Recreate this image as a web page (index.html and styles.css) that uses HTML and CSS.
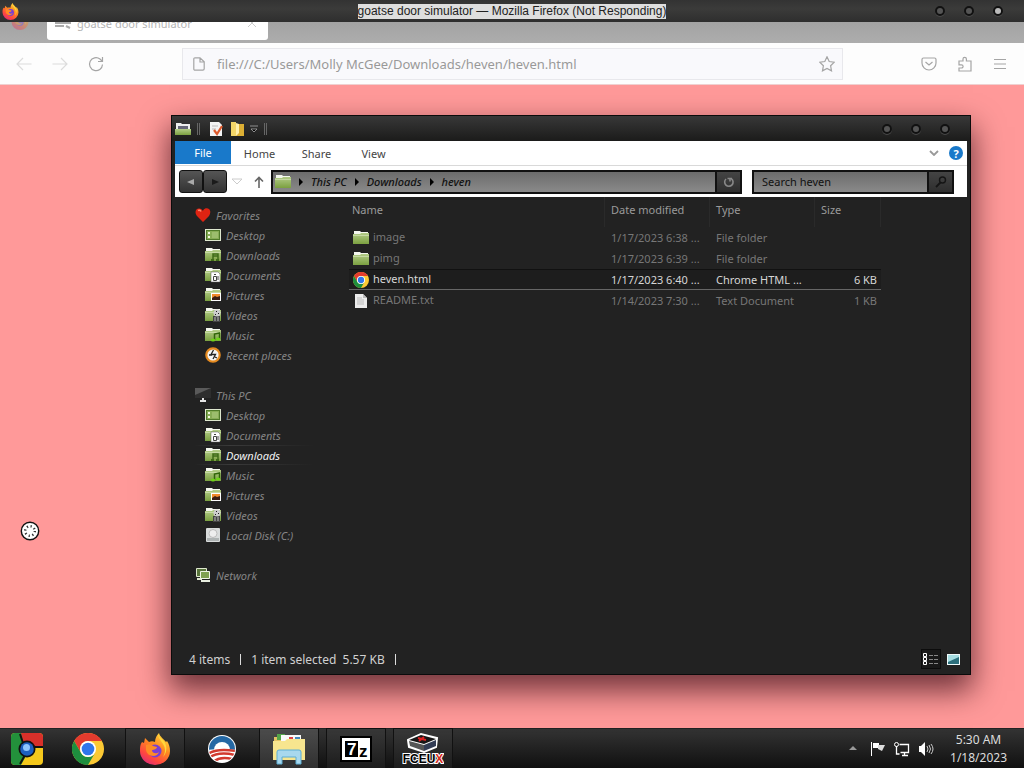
FILE: index.html
```
<!DOCTYPE html>
<html lang="en">
<head>
  <meta charset="UTF-8" />
  <meta name="viewport" content="width=device-width, initial-scale=1" />
  <title>Desktop</title>
  <link rel="stylesheet" href="styles.css">
</head>
<body>

  <!-- shared icons -->
  <svg class="defs" width="0" height="0" aria-hidden="true">
    <defs>
      <linearGradient id="g-green" x1="0" y1="0" x2="0" y2="1">
        <stop offset="0" stop-color="#b3cc88" /><stop offset="1" stop-color="#7ba040" />
      </linearGradient>
      <linearGradient id="g-fox" x1="0.8" y1="0" x2="0.2" y2="1">
        <stop offset="0" stop-color="#ffe040" /><stop offset="0.4" stop-color="#ff8a20" /><stop offset="0.75" stop-color="#ff4640" /><stop offset="1" stop-color="#d82a80" />
      </linearGradient>
      <symbol id="i-folder" viewBox="0 0 16 16">
        <path d="M1 1h6l1 1h7v4H1z" fill="#f4f7ee" />
        <path d="M0 4h7l1-1h8v11H0z" fill="url(#g-green)" />
        <path d="M0 5.500h16" stroke="#c6d9a3" />
      </symbol>
      <symbol id="i-desktop" viewBox="0 0 16 16">
        <rect x=".5" y="2.500" width="15" height="11" fill="#86ac55" stroke="#dfe8cf" />
        <rect x="1.500" y="3.500" width="13" height="9" fill="none" stroke="#4f7a2a" />
        <path d="M3 5h2v2H3zM3 9h2v2H3z" fill="#eef7dc" />
        <path d="M7 5h6v6H7z" fill="#9cbd6e" />
      </symbol>
      <symbol id="i-downloads" viewBox="0 0 16 16">
        <use href="#i-folder" width="16" height="16" />
        <path d="M8 13V7h5v6M8 9h5" fill="none" stroke="#3f6b18" stroke-width="1.500" />
        <path d="M6 12h3v2H6zM11 12h3v2h-3z" fill="#3f6b18" />
      </symbol>
      <symbol id="i-documents" viewBox="0 0 16 16">
        <use href="#i-folder" width="16" height="16" />
        <path d="M6 5h7l2 2v8H6z" fill="#fff" stroke="#555" stroke-width=".5" />
        <path d="M8.500 9.500h3v4h-3zM9 7.500h2M13 9v4" fill="none" stroke="#444" />
      </symbol>
      <symbol id="i-pictures" viewBox="0 0 16 16">
        <use href="#i-folder" width="16" height="16" />
        <rect x="6" y="6" width="10" height="8" fill="#fff" />
        <rect x="7" y="7" width="8" height="6" fill="#f08a2c" />
        <path d="M7 13v-2l3-2 2 1 3-1v4z" fill="#3a1d14" />
      </symbol>
      <symbol id="i-videos" viewBox="0 0 16 16">
        <use href="#i-folder" width="16" height="16" />
        <path d="M8 9h7v6H8z" fill="#444" />
        <circle cx="12" cy="6" r="3.500" fill="#ccc" />
        <path d="M11 4h1v1h-1zM13 6h1v1h-1zM10 7h1v1h-1z" fill="#222" />
        <path d="M9 11h2M12 11h2M9 13h2M12 13h2" stroke="#bbb" />
      </symbol>
      <symbol id="i-music" viewBox="0 0 16 16">
        <use href="#i-folder" width="16" height="16" />
        <path d="M9.500 13V7l5-1v6" fill="none" stroke="#2f6508" stroke-width="1.500" />
        <ellipse cx="8" cy="13" rx="2.200" ry="1.600" fill="#6fd318" />
        <ellipse cx="13" cy="12" rx="2.200" ry="1.600" fill="#6fd318" />
      </symbol>
      <symbol id="i-chrome" viewBox="0 0 32 32">
        <circle cx="16" cy="16" r="16" fill="#fcc934" />
        <path d="M2.140 8A16 16 0 0 1 29.860 8H16a8 8 0 0 0-6.930 12z" fill="#e33b2e" />
        <path d="M2.140 8A16 16 0 0 0 16 32l6.930-12A8 8 0 0 1 9.070 20z" fill="#1e8e3e" />
        <circle cx="16" cy="16" r="8" fill="#fff" />
        <circle cx="16" cy="16" r="6.300" fill="#2f76ea" />
      </symbol>
      <symbol id="i-firefox" viewBox="0 0 32 32">
        <path d="M3 9l2 1 1-5 4 4c2-1 4-1 6 0 0-4 2-7 4-9 1 4 5 6 7 9l1-1c2 3 3 6 3 10a15 14 0 0 1-30 0c0-4 0-6 2-9z" fill="url(#g-fox)" />
        <circle cx="16" cy="18" r="6.500" fill="#7a3fd4" />
        <path d="M7 12c3-1 5-1 7 1l4 1c0 2-3 3-5 3 0 4 5 4 7 2-2 6-12 5-13-2z" fill="#ff8c25" />
        <path d="M19 1c0 6 7 9 7 16 0 3-1 5-2 7 5-5 4-13 0-17-2-2-4-3-5-6z" fill="#ffd83c" />
      </symbol>
    </defs>
  </svg>

  <div class="firefox">
    <header class="ff-title">
      <svg class="ff-logo" width="17" height="17"><use href="#i-firefox" /></svg>
      <h1>goatse door simulator — Mozilla Firefox (Not Responding)</h1>
      <div class="orbs">
        <button class="orb" aria-label="Minimize"></button>
        <button class="orb" aria-label="Maximize"></button>
        <button class="orb orb-lit" aria-label="Close"></button>
      </div>
    </header>

    <div class="ff-tabs">
      <svg class="ff-view" width="18" height="18"><use href="#i-firefox" /></svg>
      <div class="ff-tab">
        <svg width="16" height="16" viewBox="0 0 16 16"><path d="M0 5h16M0 8h16M0 11h9M11 11l4 2" stroke="#aaa" stroke-width="2" /></svg>
        <span>goatse door simulator</span>
        <button aria-label="Close tab"><svg width="8" height="8" viewBox="0 0 8 8"><path d="M0 0l8 8M8 0L0 8" stroke="#ccc" /></svg></button>
      </div>
    </div>

    <div class="ff-toolbar">
      <button aria-label="Back" class="faded"><svg width="16" height="16" viewBox="0 0 16 16"><path d="M15.500 8H1M7 2L1 8l6 6" /></svg></button>
      <button aria-label="Forward" class="faded"><svg width="16" height="16" viewBox="0 0 16 16"><path d="M.5 8H15M9 2l6 6-6 6" /></svg></button>
      <button aria-label="Reload"><svg width="16" height="16" viewBox="0 0 16 16"><path d="M14.500 8.500A6.500 6.500 0 1 1 12 3l2 2M14.500 1v4.500H10" /></svg></button>
      <div class="ff-url">
        <svg width="12" height="14" viewBox="0 0 12 14"><path d="M2 .8h5l4.200 4v7a1.400 1.400 0 0 1-1.400 1.400H2A1.200 1.200 0 0 1 .8 12V2A1.200 1.200 0 0 1 2 .8zM7 1v4h4" /></svg>
        <input type="text" aria-label="Address" value="file:///C:/Users/Molly McGee/Downloads/heven/heven.html">
        <button aria-label="Bookmark"><svg width="16" height="16" viewBox="0 0 16 16"><path d="M8 .8l2.200 4.700 5 .7-3.600 3.500.9 5.100L8 12.400l-4.500 2.400.9-5.100L.8 6.200l5-.7z" /></svg></button>
      </div>
      <div class="ff-actions">
        <button aria-label="Pocket"><svg width="16" height="16" viewBox="0 0 16 16"><path d="M2.500 2h11A1.500 1.500 0 0 1 15 3.500V7A7 7 0 0 1 1 7V3.500A1.500 1.500 0 0 1 2.500 2zM4.500 6L8 9l3.500-3" /></svg></button>
        <button aria-label="Extensions"><svg width="16" height="16" viewBox="0 0 16 16"><path d="M2 5h4V3a1.600 1.600 0 0 1 3.400 0v2H14v10H2v-3h2.500a1.500 1.500 0 0 0 0-3.200H2z" /></svg></button>
        <button aria-label="Menu"><svg width="14" height="16" viewBox="0 0 14 16"><path d="M1 3.500h12M1 8h12M1 12.500h12" /></svg></button>
      </div>
    </div>
  </div>

  <svg class="cursor" width="20" height="20" viewBox="0 0 20 20">
    <circle cx="10" cy="10" r="8.700" fill="#fff" stroke="#111" stroke-width="1.400" />
    <circle cx="10" cy="10" r="4.800" fill="none" stroke="#333" stroke-width="2.400" stroke-dasharray="1.200 2.570" />
  </svg>

  <section class="explorer">
    <header class="ex-title">
      <svg width="16" height="16" viewBox="0 0 16 16"><path d="M1 2h5l1 1h8v6H1z" fill="#eee" /><path d="M3 5h10v3H3z" fill="#667" /><path d="M0 8h16v6H0z" fill="url(#g-green)" /></svg>
      <i class="grip"></i>
      <button aria-label="Properties"><svg width="16" height="16" viewBox="0 0 16 16"><path d="M2 1h9l3 3v11H2z" fill="#f3f3f3" /><path d="M4 5h6M4 8h4" stroke="#bbb" /><path d="M6 9l3 4 5-8" fill="none" stroke="#dd5a2c" stroke-width="2.200" /></svg></button>
      <button aria-label="New folder"><svg width="16" height="16" viewBox="0 0 16 16"><path d="M2 1h5v14H2z" fill="#f3d668" /><path d="M7 3h8v12H7z" fill="#dcaf34" /><path d="M7 2l3 1v9l-3 3z" fill="#fff0ad" /></svg></button>
      <button aria-label="Customize"><svg width="8" height="8" viewBox="0 0 8 8"><path d="M0 1h8M1 4h6L4 7z" fill="#000" stroke="#aaa" stroke-width=".8" /></svg></button>
      <i class="grip"></i>
      <div class="orbs">
        <button class="orb" aria-label="Minimize"></button>
        <button class="orb" aria-label="Maximize"></button>
        <button class="orb" aria-label="Close"></button>
      </div>
    </header>

    <nav class="ribbon">
      <button class="file">File</button>
      <button>Home</button>
      <button>Share</button>
      <button>View</button>
      <div class="ribbon-end">
        <button aria-label="Expand ribbon"><svg width="10" height="6" viewBox="0 0 10 6"><path d="M1 1l4 4 4-4" fill="none" stroke="#999" stroke-width="1.800" /></svg></button>
        <button class="help" aria-label="Help">?</button>
      </div>
    </nav>

    <div class="navbar">
      <div class="backfwd">
        <button aria-label="Back"><svg width="8" height="8" viewBox="0 0 8 8"><path d="M7 1v6L0 4z" fill="#aaa" /></svg></button>
        <button aria-label="Forward"><svg width="8" height="8" viewBox="0 0 8 8"><path d="M1 1v6l7-3z" fill="#1b1b1b" /></svg></button>
      </div>
      <button class="plain" aria-label="Recent locations"><svg width="12" height="7" viewBox="0 0 12 7"><path d="M1 1h10L6 6z" fill="#fff" stroke="#ccc" /></svg></button>
      <button class="plain" aria-label="Up"><svg width="10" height="12" viewBox="0 0 10 12"><path d="M5 12V2M1 5.500L5 1.500l4 4" fill="none" stroke="#666" stroke-width="1.600" /></svg></button>
      <div class="address">
        <div class="crumbs">
          <svg width="16" height="16"><use href="#i-folder" /></svg>
          <i></i><a href="#">This PC</a>
          <i></i><a href="#">Downloads</a>
          <i></i><a href="#">heven</a>
        </div>
        <button aria-label="Refresh"><svg width="12" height="12" viewBox="0 0 12 12"><path d="M3 3A4.200 4.200 0 1 0 8.500 2.800M4.500 2.500H9M5 2.500h2v3" fill="none" stroke="#888" stroke-width="1.600" /></svg></button>
      </div>
      <div class="search">
        <input type="text" placeholder="Search heven" aria-label="Search heven">
        <button aria-label="Search"><svg width="12" height="12" viewBox="0 0 12 12"><circle cx="7.500" cy="4" r="3" fill="none" stroke="#151515" stroke-width="1.400" /><path d="M5.500 6.500L1 11" stroke="#151515" stroke-width="1.800" /></svg></button>
      </div>
    </div>

    <div class="ex-body">
      <aside class="tree">
        <ul>
          <li class="root"><a href="#"><svg width="16" height="16" viewBox="0 0 16 16"><path d="M8 15L2 9C-1 5 1 1 4.500 1.500 7 2 8 4 8 4s1-3 4-2.700C16 2 16 6 14 9z" fill="#e02312" /><path d="M3 3.500q2-1 3 1" stroke="#ff8a70" stroke-width="1.500" fill="none" /></svg>Favorites</a></li>
          <li><a href="#"><svg width="16" height="16"><use href="#i-desktop" /></svg>Desktop</a></li>
          <li><a href="#"><svg width="16" height="16"><use href="#i-downloads" /></svg>Downloads</a></li>
          <li><a href="#"><svg width="16" height="16"><use href="#i-documents" /></svg>Documents</a></li>
          <li><a href="#"><svg width="16" height="16"><use href="#i-pictures" /></svg>Pictures</a></li>
          <li><a href="#"><svg width="16" height="16"><use href="#i-videos" /></svg>Videos</a></li>
          <li><a href="#"><svg width="16" height="16"><use href="#i-music" /></svg>Music</a></li>
          <li><a href="#"><svg width="16" height="16" viewBox="0 0 16 16"><circle cx="8" cy="8" r="6.700" fill="#f4f4f4" stroke="#e58a1f" stroke-width="2.200" /><path d="M8.500 3L6 7.500h4.500L8 12M4 8h3M10 10l2 1" stroke="#222" stroke-width="1.300" fill="none" /></svg>Recent places</a></li>
        </ul>
        <ul>
          <li class="root"><a href="#"><svg width="16" height="16" viewBox="0 0 16 16"><path d="M0 1h16v10H0z" fill="#2e2e2e" /><path d="M0 1h16L0 8z" fill="#5a5a5a" /><path d="M7 11h2v2h2v2H5v-2h2z" fill="#e6e6e6" /></svg>This PC</a></li>
          <li><a href="#"><svg width="16" height="16"><use href="#i-desktop" /></svg>Desktop</a></li>
          <li><a href="#"><svg width="16" height="16"><use href="#i-documents" /></svg>Documents</a></li>
          <li class="current"><a href="#"><svg width="16" height="16"><use href="#i-downloads" /></svg>Downloads</a></li>
          <li><a href="#"><svg width="16" height="16"><use href="#i-music" /></svg>Music</a></li>
          <li><a href="#"><svg width="16" height="16"><use href="#i-pictures" /></svg>Pictures</a></li>
          <li><a href="#"><svg width="16" height="16"><use href="#i-videos" /></svg>Videos</a></li>
          <li><a href="#"><svg width="16" height="16" viewBox="0 0 16 16"><rect x="1" y="1" width="14" height="14" rx="1" fill="#d9dcdc" /><path d="M2 11h12v3H2z" fill="#aeb3b3" /><circle cx="8" cy="6.500" r="4" fill="#eee" stroke="#bbb" /></svg>Local Disk (C:)</a></li>
        </ul>
        <ul>
          <li class="root"><a href="#"><svg width="16" height="16" viewBox="0 0 16 16"><path d="M1.500 1.500h10v8h-10z" fill="#58743a" stroke="#dfe8cf" /><path d="M2 12h5" stroke="#dfe8cf" stroke-width="2" /><path d="M5.500 4.500h9v7h-9z" fill="#7fa050" stroke="#eef3e4" /><path d="M6 14h9" stroke="#e8eee0" stroke-width="2" /></svg>Network</a></li>
        </ul>
      </aside>

      <main class="files">
        <table>
          <thead>
            <tr><th class="c-name">Name</th><th>Date modified</th><th>Type</th><th class="c-size">Size</th></tr>
          </thead>
          <tbody>
            <tr><td><svg width="16" height="16"><use href="#i-folder" /></svg>image</td><td>1/17/2023 6:38 ...</td><td>File folder</td><td></td></tr>
            <tr><td><svg width="16" height="16"><use href="#i-folder" /></svg>pimg</td><td>1/17/2023 6:39 ...</td><td>File folder</td><td></td></tr>
            <tr class="selected"><td><svg width="16" height="16"><use href="#i-chrome" /></svg>heven.html</td><td>1/17/2023 6:40 ...</td><td>Chrome HTML ...</td><td>6 KB</td></tr>
            <tr><td><svg width="16" height="16" viewBox="0 0 16 16"><path d="M2 1h8l4 4v10H2z" fill="#ececec" /><path d="M10 1v4h4" fill="#bbb" /><path d="M4 5h5M4 7h7M4 9h7M4 11h7" stroke="#bbb" /></svg>README.txt</td><td>1/14/2023 7:30 ...</td><td>Text Document</td><td>1 KB</td></tr>
          </tbody>
        </table>
      </main>
    </div>

    <footer class="status">
      <span>4 items</span>
      <span>1 item selected&nbsp; 5.57 KB</span>
      <div class="views">
        <button class="on" aria-label="Details"><svg width="16" height="14" viewBox="0 0 16 14"><path d="M.5 1.500h3v3h-3zM.5 5.500h3v3h-3zM.5 9.500h3v3h-3z" fill="#222" stroke="#fff" /><path d="M6 3.500h10M6 7.500h10M6 11.500h10" stroke="#888" stroke-dasharray="4 1" /></svg></button>
        <button aria-label="Large icons"><svg width="13" height="11" viewBox="0 0 13 11"><rect width="13" height="11" fill="#effafa" /><rect x="1" y="1" width="11" height="9" fill="#2c6f7c" /><path d="M1 1h11v2L1 8z" fill="#a5dde2" /></svg></button>
      </div>
    </footer>
  </section>

  <footer class="taskbar">
    <button class="start" aria-label="Start">
      <svg width="32" height="32" viewBox="0 0 32 32">
        <rect width="32" height="32" rx="4" fill="#f4c81c" />
        <path d="M9 0h19a4 4 0 0 1 4 4v10H20L12 8z" fill="#d8302a" />
        <path d="M4 0h6l2 8-2 10 5 5-5 9H4a4 4 0 0 1-4-4V4a4 4 0 0 1 4-4z" fill="#23913b" />
        <path d="M9 1l3 9M22 14h10M14 22l-5 9" stroke="#111" stroke-width="2" />
        <circle cx="16" cy="16" r="8.500" fill="#111" />
        <circle cx="16" cy="16" r="6.800" fill="#1d5fc0" /><circle cx="15.500" cy="14.500" r="3.500" fill="#8fc6ff" />
      </svg>
    </button>
    <div class="tasks">
      <button aria-label="Chrome"><svg width="32" height="32"><use href="#i-chrome" /></svg></button>
      <button class="open" aria-label="Firefox"><svg width="32" height="32"><use href="#i-firefox" /></svg></button>
      <button aria-label="Campaign">
        <svg width="28" height="28" viewBox="0 0 28 28">
          <defs><clipPath id="disc"><circle cx="14" cy="14" r="13" /></clipPath></defs>
          <circle cx="14" cy="14" r="14" fill="#fff" />
          <g clip-path="url(#disc)">
            <path d="M0 0h28v17H0z" fill="#2468a4" />
            <circle cx="14" cy="15" r="8" fill="#fff" />
            <path d="M0 15q14-2 28 0v13H0z" fill="#fff" />
            <path d="M0 19q8-6 28-3M1 23q9-7 26-3M5 27q7-6 19-3" fill="none" stroke="#d23a2e" stroke-width="2.400" />
          </g>
        </svg>
      </button>
      <button class="open active" aria-label="File Explorer">
        <svg width="32" height="32" viewBox="0 0 32 32">
          <path d="M1 4h10l2 2h17v21H1z" fill="#e2c264" />
          <path d="M4 1h8v6H4z" fill="#54a548" /><path d="M8 2h20v6H8z" fill="#fafafa" /><path d="M16 4h4v2h-4z" fill="#d44" /><path d="M22 4h5v2h-5z" fill="#48b" />
          <path d="M0 8h12l2-2h18v21H0z" fill="#f7e58f" />
          <path d="M4 31V19q0-2 2-2h20q2 0 2 2v12h-5v-7H9v7z" fill="#a8d8ee" stroke="#5daed4" />
        </svg>
      </button>
      <button class="open" aria-label="7-Zip">
        <svg width="32" height="26" viewBox="0 0 32 26">
          <rect x="1" y="1" width="30" height="24" fill="#fff" stroke="#000" stroke-width="2" />
          <rect x="5" y="5" width="13" height="16" fill="#000" />
          <text x="7" y="19" class="zip-seven">7</text><text x="19" y="21" class="zip-z">z</text>
        </svg>
      </button>
      <button class="open" aria-label="FCEUX">
        <svg width="42" height="34" viewBox="0 0 42 34">
          <path d="M6 8l13-6 16 4-1 9-12 5L7 15z" fill="#fff" stroke="#fff" stroke-width="2" />
          <path d="M7 8l12-5 15 4-12 5z" fill="#171717" /><path d="M7 9l15 4v6L8 14z" fill="#555" /><path d="M22 13l12-5v6l-12 5z" fill="#333d55" />
          <path d="M16 6l8 2M22 5l-5 4" stroke="#d22" stroke-width="2" />
          <text x="21" y="31" text-anchor="middle" class="fceu">FCEU<tspan class="fceu-x">X</tspan></text>
        </svg>
      </button>
    </div>
    <div class="tray">
      <svg width="8" height="5" viewBox="0 0 8 5"><path d="M4 0l4 4H0z" fill="#999" /></svg>
      <svg width="16" height="16" viewBox="0 0 16 16"><path d="M1.500 1v14" stroke="#fff" /><path d="M3 2h6v5H3z" fill="#fff" /><path d="M8 4h7l-3 6-4-2z" fill="#ddd" /></svg>
      <svg width="16" height="16" viewBox="0 0 16 16"><path d="M5.500 3.500h9v8h-8M8 14.500h6M10.500 12v2M2.500 5v8h3" fill="none" stroke="#fff" stroke-width="1.300" /><circle cx="2.500" cy="3.500" r="2" fill="none" stroke="#fff" /></svg>
      <svg width="16" height="16" viewBox="0 0 16 16"><path d="M1 5h2l4-4v14l-4-4H1z" fill="#fff" /><path d="M9 5q2 3 0 6M11 4q3 4 0 8M13 3q4 5 0 10" fill="none" stroke="#ccc" /></svg>
      <div class="clock"><time>5:30 AM</time><time>1/18/2023</time></div>
    </div>
  </footer>

</body>
</html>
```
FILE: styles.css
```
* { box-sizing: border-box; }

body {
  margin: 0;
  height: 100vh;
  overflow: hidden;
  position: relative;
  display: flex;
  flex-direction: column;
  background-color: #ff9999;
  font-family: "Noto Sans", "Open Sans", sans-serif;
  font-size: 11px;
}

button {
  display: flex;
  align-items: center;
  justify-content: center;
  padding: 0;
  border: none;
  background: none;
  font: inherit;
  color: inherit;
}

input { font: inherit; min-width: 0; }

a { color: inherit; text-decoration: none; }

ul { list-style: none; margin: 0; padding: 0; }

svg { flex: none; }

.defs { position: absolute; }

/* round window buttons */
.orbs {
  display: flex;
  gap: 19px;
  margin-left: auto;
}

.orb {
  width: 10px;
  height: 10px;
  border: 2px solid #111;
  border-radius: 50%;
  background-color: #555;
  box-shadow: 0 1px 0 #484848;
}

.orb-lit { background-color: #bbb; }

/* firefox */
.firefox { flex: 1; }

.ff-title {
  display: grid;
  grid-template-columns: 1fr auto 1fr;
  align-items: center;
  height: 22px;
  background: linear-gradient(#333, #3b3b3a 40%, #2e2e2e);
}

.ff-logo { margin-left: 2px; }

.ff-title h1 {
  margin: 0;
  background-color: #dedede;
  color: #222;
  font: 12px/15px "Liberation Sans", sans-serif;
}

.ff-title .orbs { margin-right: 21px; }

.ff-tabs {
  display: flex;
  align-items: flex-end;
  gap: 18px;
  height: 21px;
  padding: 0 11px 3px;
  overflow: hidden;
  background: linear-gradient(#a3a3a3, #adadad);
}

.ff-view {
  margin-bottom: 10px;
  opacity: 0.4;
}

.ff-tab {
  display: flex;
  align-items: center;
  gap: 6px;
  width: 221px;
  height: 34px;
  padding: 0 12px 0 8px;
  border-radius: 3px;
  background-color: #fff;
  color: #b5b5b5;
}

.ff-tab button { margin-left: auto; }

.ff-toolbar {
  display: flex;
  align-items: center;
  gap: 20px;
  height: 42px;
  padding: 0 17px 0 16px;
  background-color: #fdfdfd;
  border-bottom: 1px solid #efd0d0;
}

.ff-toolbar svg {
  fill: none;
  stroke: #a5a5a5;
  stroke-width: 1.2;
}

.ff-toolbar .faded svg { stroke: #dcdcdc; }

.ff-url {
  flex: 1;
  display: flex;
  align-items: center;
  gap: 12px;
  height: 32px;
  margin: 0 58px;
  padding: 0 7px 0 10px;
  border: 1px solid #e8e8ec;
  background-color: #f9f9fc;
}

.ff-url input {
  flex: 1;
  padding: 0;
  border: none;
  background: none;
  color: #999;
  font-size: 13px;
}

.ff-actions {
  display: flex;
  gap: 20px;
}

/* busy pointer */
.cursor {
  position: absolute;
  left: 20px;
  top: 521px;
}

/* file explorer */
.explorer {
  position: absolute;
  top: 115px;
  right: 53px;
  bottom: 93px;
  left: 171px;
  display: flex;
  flex-direction: column;
  padding: 0 3px;
  border: 1px solid #0b0b0b;
  background-color: #222;
  color: #858585;
  box-shadow: 0 14px 28px 2px rgba(40, 0, 10, 0.65);
}

.ex-title {
  display: flex;
  align-items: center;
  gap: 5px;
  height: 25px;
  margin: 0 -3px;
  padding: 0 20px 0 3px;
  background: linear-gradient(#383838, #1b1b1a);
}

.grip {
  width: 3px;
  height: 12px;
  margin: 0 3px 0 1px;
  border: solid #666;
  border-width: 0 1px;
}

.ribbon {
  display: flex;
  height: 25px;
  padding-right: 4px;
  border-bottom: 1px solid #d9d9d9;
  background-color: #fff;
  color: #444;
}

.ribbon > button { width: 57px; }

.ribbon .file {
  width: 56px;
  height: 23px;
  background-color: #1979ca;
  color: #fff;
}

.ribbon-end {
  display: flex;
  align-items: center;
  gap: 10px;
  margin-left: auto;
}

.ribbon-end .help {
  width: 14px;
  height: 14px;
  border-radius: 50%;
  background-color: #1979ca;
  color: #fff;
  font-weight: bold;
}

.navbar {
  display: flex;
  align-items: center;
  gap: 10px;
  height: 31px;
  padding: 0 13px 0 4px;
  background-color: #fff;
  color: #111;
}

.backfwd {
  display: flex;
  margin-right: -6px;
}

.backfwd button {
  width: 24px;
  height: 23px;
  border: 1px solid #111;
  border-radius: 3px;
  background: linear-gradient(#555, #333);
}

.navbar .plain { width: 12px; }

.address, .search {
  display: flex;
  height: 24px;
  border: 2px solid #111;
  background: linear-gradient(#6c6c6c, #8a8a8a);
}

.address {
  flex: 1;
  margin-left: -4px;
}

.crumbs {
  flex: 1;
  display: flex;
  align-items: center;
  gap: 8px;
  padding-left: 2px;
  font-style: italic;
  font-weight: 500;
}

.crumbs i {
  border: solid transparent;
  border-width: 4px 0 4px 4px;
  border-left-color: #000;
}

.address button, .search button {
  width: 25px;
  border-left: 2px solid #111;
  background: linear-gradient(#444, #2e2e2e);
}

.search { width: 202px; }

.search input {
  flex: 1;
  padding: 0 8px;
  border: none;
  background: none;
}

.search input::placeholder { color: #111; }

.ex-body {
  flex: 1;
  display: flex;
  min-height: 0;
}

.tree {
  width: 174px;
  padding: 8px 0 0 20px;
  font-style: italic;
}

.tree ul { margin-bottom: 20px; }

.tree a {
  display: flex;
  align-items: center;
  gap: 5px;
  width: 118px;
  height: 20px;
  padding-left: 10px;
  white-space: nowrap;
}

.tree .root a { padding-left: 0; }

.tree .current a {
  border: solid;
  border-width: 1px 0;
  border-image: linear-gradient(to right, #222, #3a3a3a 30%, #222) 1;
  color: #f2f2f2;
}

.files { flex: 1; }

table {
  table-layout: fixed;
  width: 532px;
  border-collapse: separate;
  border-spacing: 0;
}

th, td {
  height: 21px;
  padding: 0 0 0 6px;
  text-align: left;
  white-space: nowrap;
  font-weight: normal;
}

th {
  height: 30px;
  padding-bottom: 6px;
  border-right: 1px solid #2a2a2a;
  color: #9a9a9a;
}

.c-name { width: 256px; }
.c-size { width: 66px; }

th:first-child, td:first-child { padding-left: 3px; }

td { color: #777; }

td svg {
  margin: 0 4px 0 1px;
  vertical-align: middle;
}

td:last-child {
  padding-right: 4px;
  text-align: right;
}

.selected td {
  border: solid #111;
  border-width: 1px 0;
  border-bottom-color: #666;
  background-color: #1d1d1d;
  color: #d6d6d6;
}

.status {
  display: flex;
  align-items: center;
  height: 30px;
  padding: 0 4px 0 14px;
  color: #d0d0d0;
  font-size: 12px;
}

.status span {
  margin-right: 10px;
  padding-right: 10px;
  border-right: 1px solid #ddd;
  line-height: 11px;
}

.views {
  display: flex;
  gap: 2px;
  margin-left: auto;
}

.views button {
  width: 20px;
  height: 20px;
}

.views .on {
  border: 1px solid #0c0c0c;
  background-color: #191919;
}

/* taskbar */
.taskbar {
  display: flex;
  align-items: center;
  height: 40px;
  border-top: 1px solid #222;
  background: linear-gradient(#333, #101010);
  color: #ddd;
}

.start {
  width: 54px;
  height: 39px;
}

.tasks {
  display: flex;
  gap: 9px;
  margin-left: 5px;
}

.tasks button {
  width: 58px;
  height: 39px;
}

.tasks .open {
  outline: 1px solid #111;
  background: linear-gradient(#383838, #1c1c1c);
}

.tasks .active { background: linear-gradient(#4c4c4c, #303030); }

.zip-seven, .zip-z {
  font: bold 17px "Liberation Sans", sans-serif;
}

.zip-seven { fill: #fff; }

.fceu {
  font: bold 12px "Liberation Sans Narrow", "Liberation Sans", sans-serif;
  paint-order: stroke;
  stroke: #fff;
  stroke-width: 2px;
}

.fceu-x { fill: #d8281c; }

.tray {
  display: flex;
  align-items: center;
  gap: 8px;
  margin-left: auto;
  padding-right: 17px;
}

.tray svg:first-child { margin-right: 5px; }

.clock {
  display: flex;
  flex-direction: column;
  margin-left: 8px;
  font-size: 12px;
  line-height: 18px;
  text-align: center;
}
```
